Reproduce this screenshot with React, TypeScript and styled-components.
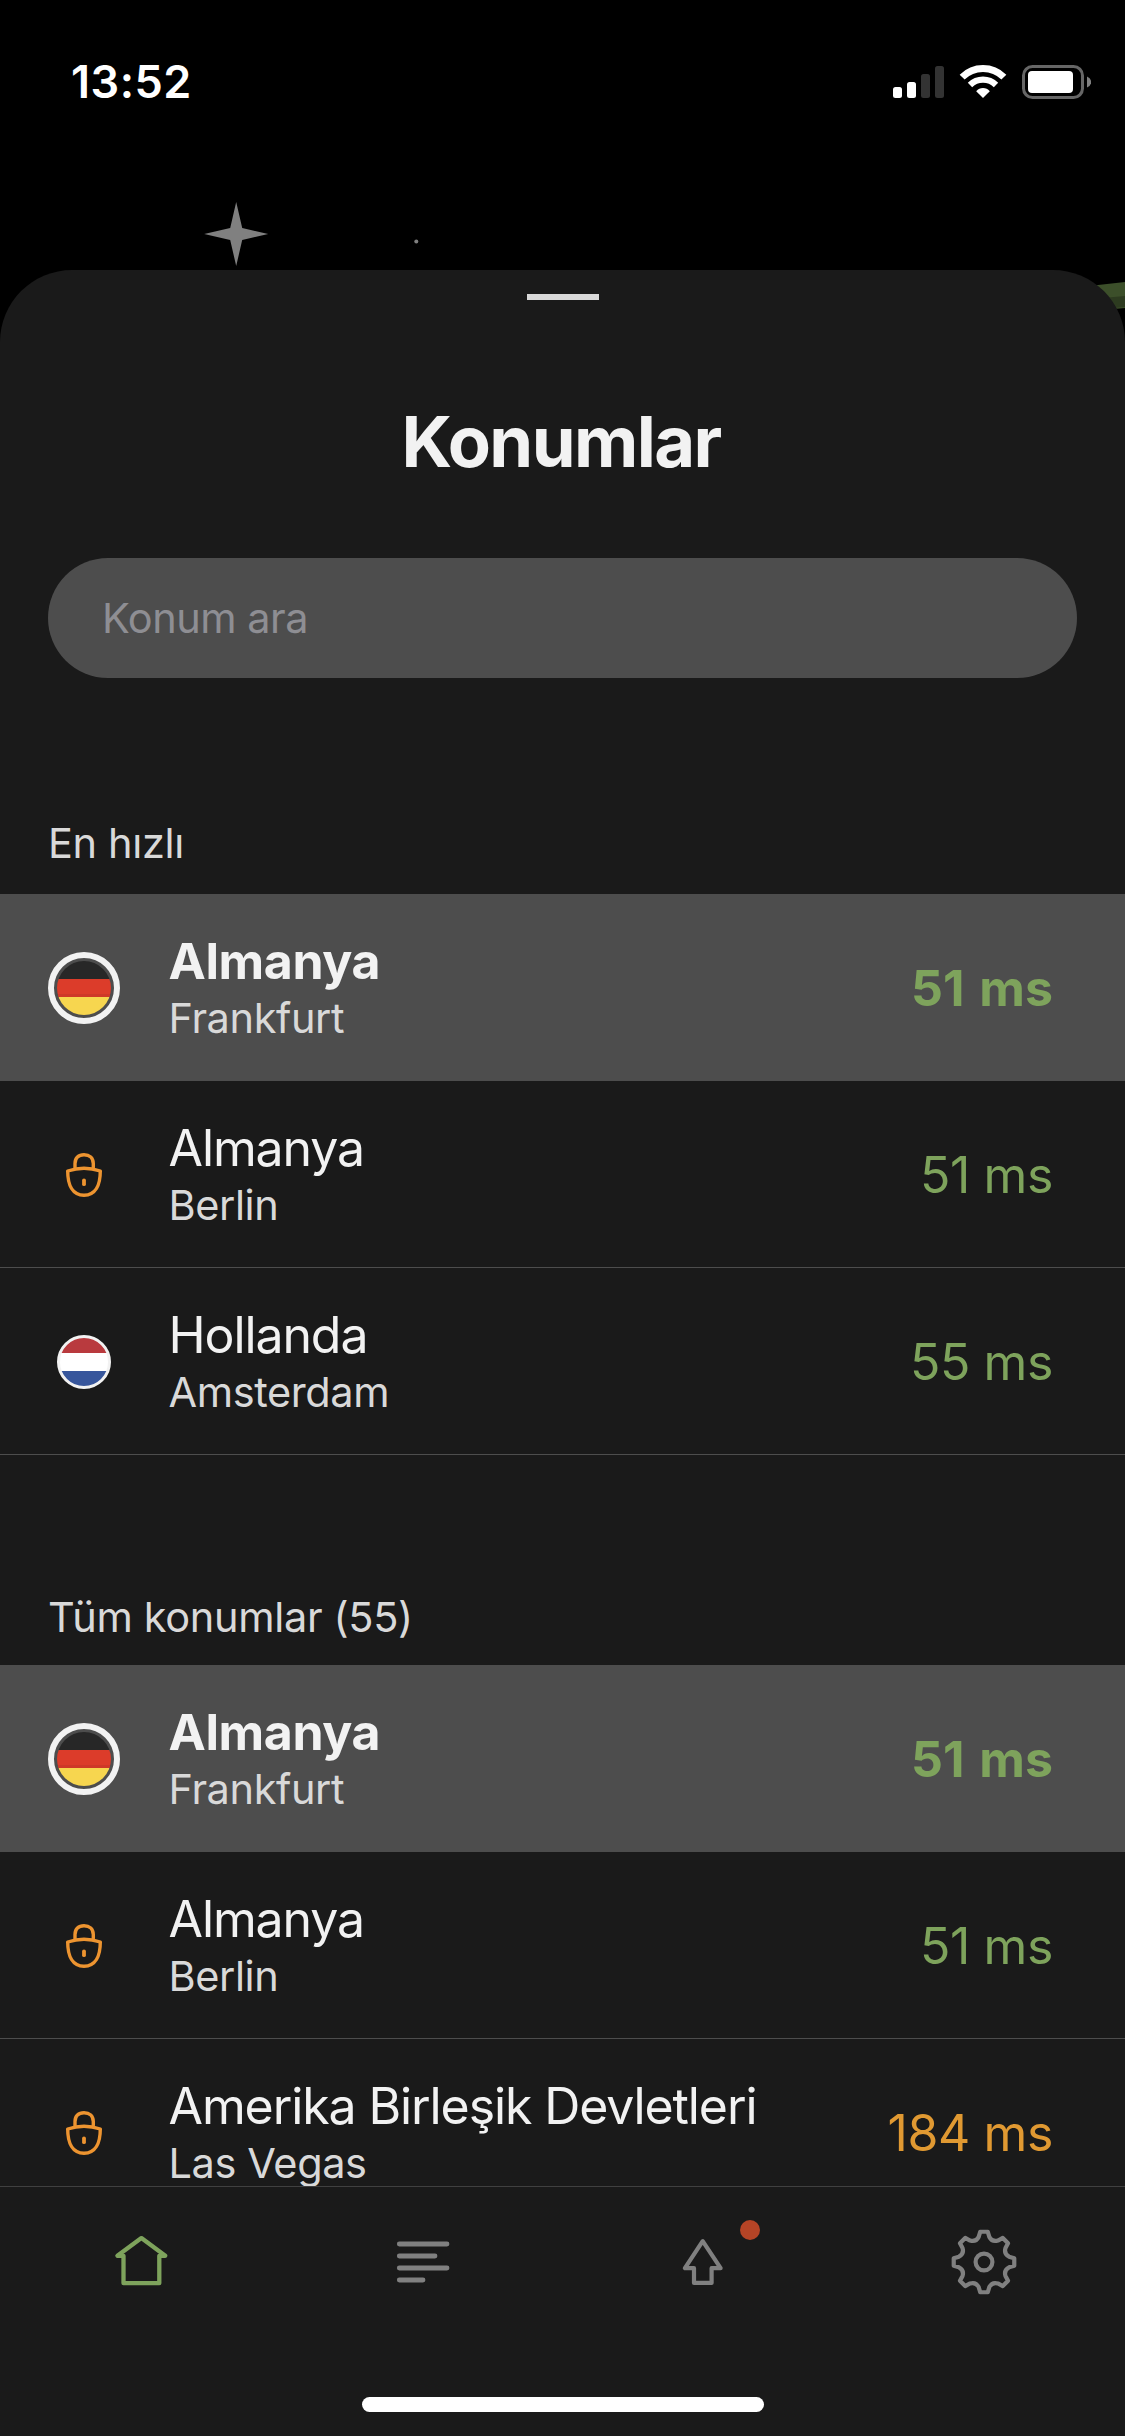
import React from "react";
import styled, { createGlobalStyle } from "styled-components";

const color = {
  surface: "#1a1a1a",
  raised: "#4d4d4d",
  text: "#f2f2f2",
  muted: "#d9d9d9",
  placeholder: "#8e8e93",
  green: "#7ea35c",
  orange: "#e09932",
  lock: "#ed9430",
  icon: "#808080",
};

const GlobalStyle = createGlobalStyle`
  * { box-sizing: border-box; }
  body {
    margin: 0;
    background: #000;
    font-family: Inter, "Liberation Sans", sans-serif;
    -webkit-font-smoothing: antialiased;
  }
`;

const Screen = styled.div`
  position: relative;
  display: flex;
  flex-direction: column;
  width: 1125px;
  height: 2436px;
  overflow: hidden;
  background: #000;
`;

const Sky = styled.svg`
  position: absolute;
  top: 0;
  left: 0;
`;

const StatusBar = styled.header`
  position: relative;
  display: flex;
  flex: none;
  justify-content: space-between;
  align-items: flex-start;
  height: 270px;
  padding: 52px 34px 0 71px;
`;

const Clock = styled.time`
  color: #fff;
  font-size: 45px;
  font-weight: 600;
  line-height: 60px;
  letter-spacing: 0.5px;
`;

const StatusIcons = styled.svg`
  margin-top: 8px;
`;

const Sheet = styled.main`
  position: relative;
  display: flex;
  flex: 1;
  flex-direction: column;
  min-height: 0;
  padding-top: 24px;
  border-radius: 72px 72px 0 0;
  background: ${color.surface};
`;

const Handle = styled.div`
  flex: none;
  align-self: center;
  width: 72px;
  height: 6px;
  background: ${color.muted};
`;

const Title = styled.h1`
  flex: none;
  margin: 97px 0 0;
  padding-right: 3px;
  color: ${color.text};
  font-size: 70.5px;
  font-weight: 700;
  line-height: 90px;
  letter-spacing: -1.6px;
  text-align: center;
`;

const Search = styled.input`
  flex: none;
  height: 120px;
  margin: 71px 48px 0;
  padding: 0 54px;
  border: 0;
  border-radius: 60px;
  outline: 0;
  background: ${color.raised};
  color: ${color.text};
  font: 400 41.5px Inter, "Liberation Sans", sans-serif;
  letter-spacing: -0.5px;

  &::placeholder {
    color: ${color.placeholder};
    opacity: 1;
  }
`;

const Lists = styled.div`
  flex: 1;
  min-height: 0;
`;

const Section = styled.section<{ $top: number }>`
  padding-top: ${(p) => p.$top}px;
`;

const SectionTitle = styled.h2<{ $bottom: number }>`
  margin: 0 0 ${(p) => p.$bottom}px 48px;
  color: ${color.muted};
  font-size: 41.5px;
  font-weight: 400;
  line-height: 50px;
  letter-spacing: -0.35px;
`;

const Row = styled.div<{ $active?: boolean }>`
  display: flex;
  align-items: flex-start;
  height: 187px;
  padding: 0 72px 0 48px;
  border-bottom: 1px solid ${color.raised};
  background: ${(p) => (p.$active ? color.raised : "transparent")};
`;

const Badge = styled.svg`
  flex: none;
  margin: 58px 48.5px 0 0;
`;

const Place = styled.div`
  flex: 1;
  padding-top: 37px;
  white-space: nowrap;
`;

const Country = styled.div<{ $active?: boolean }>`
  color: ${color.text};
  font-size: 50px;
  font-weight: ${(p) => (p.$active ? 700 : 400)};
  line-height: 60px;
  letter-spacing: ${(p) => (p.$active ? -0.4 : -1.1)}px;
`;

const City = styled.div`
  margin-top: 4px;
  color: ${color.muted};
  font-size: 41.5px;
  line-height: 46px;
  letter-spacing: -0.4px;
`;

const Ping = styled.div<{ $active?: boolean; $slow?: boolean }>`
  padding-top: 64px;
  color: ${(p) => (p.$slow ? color.orange : color.green)};
  font-size: 50px;
  font-weight: ${(p) => (p.$active ? 700 : 400)};
  line-height: 60px;
  letter-spacing: ${(p) => (p.$active ? 0 : -0.4)}px;
  word-spacing: ${(p) => (p.$active ? 3 : 0)}px;
  white-space: nowrap;
`;

const TabBar = styled.nav`
  position: relative;
  display: flex;
  flex: none;
  flex-direction: column;
  justify-content: space-between;
  height: 250px;
  padding: 39px 0 24px;
  border-top: 1px solid #404040;
  background: ${color.surface};
`;

const Tabs = styled.div`
  display: grid;
  grid-template-columns: repeat(4, 1fr);
`;

const Tab = styled.div`
  position: relative;
  display: flex;
  justify-content: center;
`;

const Dot = styled.span`
  position: absolute;
  top: -6px;
  left: 177px;
  width: 20px;
  height: 20px;
  border-radius: 50%;
  background: #b54426;
`;

const HomeIndicator = styled.div`
  align-self: center;
  width: 402px;
  height: 15px;
  border-radius: 8px;
  background: #fff;
`;

function GermanFlag() {
  return (
    <Badge width="72" height="72" viewBox="0 0 72 72">
      <clipPath id="de">
        <circle cx="36" cy="36" r="27" />
      </clipPath>
      <circle cx="36" cy="36" r="33" fill="none" stroke={color.text} strokeWidth="6" />
      <g clipPath="url(#de)">
        <rect x="9" y="9" width="54" height="18" fill="#272727" />
        <rect x="9" y="27" width="54" height="18" fill="#dc3c2a" />
        <rect x="9" y="42" width="54" height="3" fill="#ce3828" />
        <rect x="9" y="45" width="54" height="18" fill="#f7d64f" />
      </g>
    </Badge>
  );
}

function DutchFlag() {
  return (
    <Badge width="72" height="72" viewBox="0 0 72 72">
      <clipPath id="nl">
        <circle cx="36" cy="36" r="26" />
      </clipPath>
      <g clipPath="url(#nl)">
        <rect x="9" y="9" width="54" height="18" fill="#b93a3e" />
        <rect x="9" y="27" width="54" height="18" fill="#fff" />
        <rect x="9" y="45" width="54" height="18" fill="#37569c" />
      </g>
      <circle cx="36" cy="36" r="25.5" fill="none" stroke={color.text} strokeWidth="3" />
    </Badge>
  );
}

function Lock() {
  return (
    <Badge
      width="72"
      height="72"
      viewBox="0 0 72 72"
      fill="none"
      stroke={color.lock}
      strokeWidth="3.4"
      strokeLinejoin="round"
      strokeLinecap="round"
    >
      <path d="M27 28.6V24.5C27 19 30.5 15.7 36 15.7S45.3 19 45.3 24.5V28.6" />
      <path d="M19.7 32Q36 26.6 52.3 32C52.3 46 47.5 56.2 36 56.2S19.7 46 19.7 32Z" />
      <path d="M36 41.3V45.2" strokeWidth="3.8" />
    </Badge>
  );
}

function HomeIcon() {
  return (
    <svg
      width="72"
      height="72"
      viewBox="0 0 72 72"
      fill="none"
      stroke={color.green}
      strokeWidth="4.3"
      strokeLinejoin="round"
    >
      <path d="M36.4 12.1L12.4 29.8H18.5V57.2H54.3V29.8H60.3Z" />
    </svg>
  );
}

function ListIcon() {
  return (
    <svg
      width="72"
      height="72"
      viewBox="0 0 72 72"
      fill="none"
      stroke={color.icon}
      strokeWidth="4.8"
      strokeLinecap="round"
    >
      <path d="M13.3 18H61M13.3 30H49M13.3 42H61M13.3 54H37" />
    </svg>
  );
}

function UpIcon() {
  return (
    <svg
      width="72"
      height="72"
      viewBox="0 0 72 72"
      fill="none"
      stroke={color.icon}
      strokeWidth="4.2"
      strokeLinejoin="round"
    >
      <path d="M35.7 15.2L17.9 42.2H27V56.9H44.6V42.2H53.6Z" />
    </svg>
  );
}

const polar = (r: number, deg: number) => {
  const a = ((deg - 90) * Math.PI) / 180;
  return `${(36 + r * Math.cos(a)).toFixed(2)} ${(36 + r * Math.sin(a)).toFixed(2)}`;
};

const gearPath =
  Array.from({ length: 8 }, (_, i) => {
    const a = i * 45;
    return (
      `${i ? "L" : "M"}${polar(30.5, a - 7)}L${polar(30.5, a + 7)}L${polar(25.6, a + 12)}` +
      `Q${polar(21.3, a + 22.5)} ${polar(25.6, a + 33)}`
    );
  }).join("") + "Z";

function GearIcon() {
  return (
    <svg
      width="72"
      height="72"
      viewBox="0 0 72 72"
      fill="none"
      stroke={color.icon}
      strokeWidth="4.2"
      strokeLinejoin="round"
    >
      <path d={gearPath} />
      <circle cx="36" cy="36" r="8.4" />
    </svg>
  );
}

type Location = {
  country: string;
  city: string;
  ping: number;
  badge: "de" | "nl" | "lock";
  active?: boolean;
};

const fastest: Location[] = [
  { country: "Almanya", city: "Frankfurt", ping: 51, badge: "de", active: true },
  { country: "Almanya", city: "Berlin", ping: 51, badge: "lock" },
  { country: "Hollanda", city: "Amsterdam", ping: 55, badge: "nl" },
];

const all: Location[] = [
  { country: "Almanya", city: "Frankfurt", ping: 51, badge: "de", active: true },
  { country: "Almanya", city: "Berlin", ping: 51, badge: "lock" },
  { country: "Amerika Birleşik Devletleri", city: "Las Vegas", ping: 184, badge: "lock" },
];

const badges = { de: GermanFlag, nl: DutchFlag, lock: Lock };

function LocationRow({ country, city, ping, badge, active }: Location) {
  const Icon = badges[badge];
  return (
    <Row $active={active}>
      <Icon />
      <Place>
        <Country $active={active}>{country}</Country>
        <City>{city}</City>
      </Place>
      <Ping $active={active} $slow={ping > 100}>
        {ping} ms
      </Ping>
    </Row>
  );
}

export default function App() {
  return (
    <Screen>
      <GlobalStyle />
      <Sky width="1125" height="400" viewBox="0 0 1125 400">
        <path d="M236.2 202L242.2 228L268.2 234L242.2 240L236.2 266L230.2 240L204.2 234L230.2 228Z" fill="#808080" />
        <circle cx="416.3" cy="241.5" r="2" fill="#808080" />
        <path d="M1080 287L1125 282V308L1080 312Z" fill="#3c4f2a" />
        <path d="M1080 300L1125 296V307L1080 311Z" fill="#2d3b20" />
      </Sky>
      <StatusBar>
        <Clock>13:52</Clock>
        <StatusIcons width="198" height="44" viewBox="893 60 198 44">
          <rect x="893" y="87" width="9" height="11" rx="2.5" fill="#fff" />
          <rect x="907" y="82" width="9" height="16" rx="2.5" fill="#fff" />
          <rect x="921" y="74" width="9" height="24" rx="2.5" fill="#333" />
          <rect x="935" y="66" width="9" height="32" rx="2.5" fill="#333" />
          <g fill="none" stroke="#fff">
            <path d="M962.14 77.14A29.5 29.5 0 0 1 1003.86 77.14" strokeWidth="7" />
            <path d="M970 85A18.4 18.4 0 0 1 996 85" strokeWidth="6.2" />
          </g>
          <path d="M983 98L976.2 91.2Q979 88 983 88T989.8 91.2Z" fill="#fff" />
          <rect x="1023.5" y="66.5" width="59" height="31" rx="9" fill="none" stroke="#666" strokeWidth="3" />
          <rect x="1028" y="71" width="45" height="22" rx="4" fill="#fff" />
          <path d="M1087 76.5Q1091.2 78.5 1091.2 82T1087 87.5Z" fill="#808080" />
        </StatusIcons>
      </StatusBar>
      <Sheet>
        <Handle />
        <Title>Konumlar</Title>
        <Search placeholder="Konum ara" />
        <Lists>
          <Section $top={140}>
            <SectionTitle $bottom={26}>En hızlı</SectionTitle>
            {fastest.map((l) => (
              <LocationRow key={l.city} {...l} />
            ))}
          </Section>
          <Section $top={137}>
            <SectionTitle $bottom={23}>Tüm konumlar (55)</SectionTitle>
            {all.map((l) => (
              <LocationRow key={l.city} {...l} />
            ))}
          </Section>
        </Lists>
        <TabBar>
          <Tabs>
            <Tab>
              <HomeIcon />
            </Tab>
            <Tab>
              <ListIcon />
            </Tab>
            <Tab>
              <UpIcon />
              <Dot />
            </Tab>
            <Tab>
              <GearIcon />
            </Tab>
          </Tabs>
          <HomeIndicator />
        </TabBar>
      </Sheet>
    </Screen>
  );
}
